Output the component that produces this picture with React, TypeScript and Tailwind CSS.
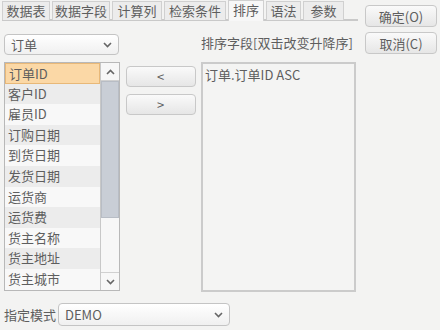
import React from 'react'

const tabs: [string, number][] = [
  ['数据表', 48],
  ['数据字段', 58],
  ['计算列', 50],
  ['检索条件', 62],
  ['排序', 36],
  ['语法', 35],
  ['参数', 41],
]
const fields = ['订单ID', '客户ID', '雇员ID', '订购日期', '到货日期', '发货日期', '运货商', '运货费', '货主名称', '货主地址', '货主城市']

const Chevron = ({ up = false }: { up?: boolean }) => (
  <svg width="9" height="6" viewBox="0 0 9 6" className={up ? 'rotate-180' : ''}>
    <path d="M1 1l3.5 3.5L8 1" fill="none" stroke="#666" strokeWidth="1.6" />
  </svg>
)

const Select = ({ value, className }: { value: string; className: string }) => (
  <div className={`flex items-center justify-between border border-[#c4c4c4] rounded-sm bg-gradient-to-b from-white to-[#f0f0f0] px-1.5 leading-none ${className}`}>
    <span>{value}</span>
    <Chevron />
  </div>
)

const Btn = ({ label, className }: { label: string; className: string }) => (
  <div className={`flex items-center justify-center border border-[#c8c8c8] rounded-sm bg-gradient-to-b from-[#fafafa] to-[#e6e6e6] leading-none ${className}`}>
    {label}
  </div>
)

export default function App() {
  return (
    <div
      className="w-[440px] h-[330px] bg-[#f3f3f2] text-[#5e5e5e] text-[13px] relative overflow-hidden"
      style={{ fontFamily: '"Noto Sans CJK SC", "Liberation Sans", sans-serif' }}
    >
      <div className="flex">
        <div className="w-[358px] pl-[2px]">
          <div className="flex gap-[2px] h-[21px] border-b-2 border-[#c9c9c9]">
            {tabs.map(([t, w]) => (
              <div
                key={t}
                style={{ width: w }}
                className={`shrink-0 whitespace-nowrap text-center leading-[18px] border border-b-0 border-[#d0d0d0] ${t === '排序' ? 'bg-[#f7f7f7] h-[21px] border-[#bdbdbd]' : 'bg-[#ececec] h-[19px] mt-[1px]'}`}
              >
                {t}
              </div>
            ))}
          </div>
          <div className="flex pt-[13px] pl-[2px]">
            <div className="w-[116px] flex flex-col gap-[7px]">
              <Select value="订单" className="h-[21px] w-[115px]" />
              <div className="flex h-[229px] border border-[#b8b8b8] bg-white">
                <div className="flex-1 flex flex-col overflow-hidden">
                  {fields.map((f, i) => (
                    <div
                      key={f}
                      className={`h-[20.6px] leading-[19px] pl-[3px] shrink-0 whitespace-nowrap ${i === 0 ? 'bg-[#fbd8a6] border border-[#e8b878]' : i % 2 === 1 ? 'bg-[#ececec]' : 'bg-[#f8f8f8]'}`}
                    >
                      {f}
                    </div>
                  ))}
                </div>
                <div className="w-[19px] flex flex-col border-l border-[#c8c8c8] bg-[#f7f7f7]">
                  <div className="h-[18px] flex items-center justify-center border-b border-[#d0d0d0]">
                    <Chevron up />
                  </div>
                  <div className="h-[137px] bg-[#c9ced6] border border-[#b8bdc5]" />
                  <div className="flex-1" />
                  <div className="h-[18px] flex items-center justify-center border-t border-[#d0d0d0]">
                    <Chevron />
                  </div>
                </div>
              </div>
            </div>
            <div className="w-[81px] flex flex-col items-center pt-[32px] gap-[7px]">
              <Btn label="<" className="w-[70px] h-[21px]" />
              <Btn label=">" className="w-[70px] h-[21px]" />
            </div>
            <div className="flex flex-col">
              <div className="h-[28px] leading-[18px] whitespace-nowrap">排序字段[双击改变升降序]</div>
              <div className="w-[155px] h-[230px] border-2 border-[#cbcbcb] bg-[#f4f4f3] px-[2px] pt-[2px] leading-[18px]">
                订单.订单ID ASC
              </div>
            </div>
          </div>
        </div>
        <div className="pl-[7px] pt-[5px] flex flex-col gap-[5px]">
          <Btn label="确定(O)" className="w-[72px] h-[22px] border-[#a8a8a8]" />
          <Btn label="取消(C)" className="w-[72px] h-[22px]" />
        </div>
      </div>
      <div className="flex items-center pl-[4px] pt-[11px]">
        <span className="w-[54px] whitespace-nowrap">指定模式</span>
        <Select value="DEMO" className="h-[23px] w-[172px]" />
      </div>
    </div>
  )
}
